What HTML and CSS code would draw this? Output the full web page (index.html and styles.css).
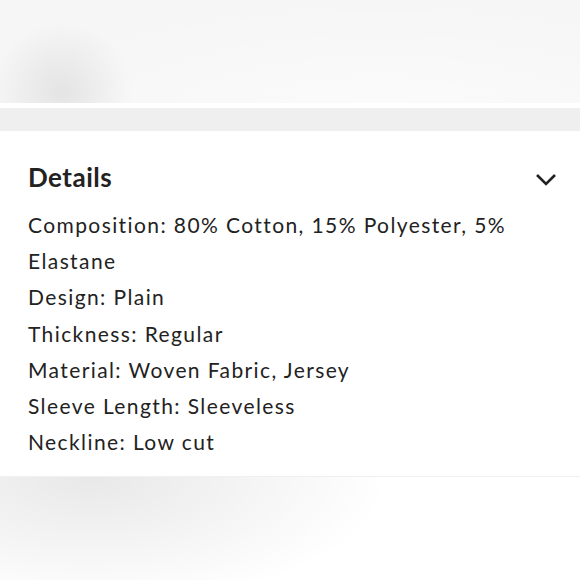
FILE: index.html
```html
<!DOCTYPE html>
<html>
<head>
<meta charset="utf-8">
<link rel="stylesheet" href="styles.css">
</head>
<body>
<div class="photo-top"></div>
<div class="divider"></div>
<section class="panel">
  <div class="panel-head">
    <h2 class="title">Details</h2>
    <svg class="chevron" width="22" height="14" viewBox="0 0 22 14"><path d="M2 2 L11 11 L20 2" fill="none" stroke="#222" stroke-width="2.6"/></svg>
  </div>
  <div class="list">
    <p>Composition: 80% Cotton, 15% Polyester, 5% Elastane</p>
    <p>Design: Plain</p>
    <p>Thickness: Regular</p>
    <p>Material: Woven Fabric, Jersey</p>
    <p>Sleeve Length: Sleeveless</p>
    <p>Neckline: Low cut</p>
  </div>
</section>
<div class="photo-bottom"></div>
</body>
</html>
```
FILE: styles.css
```css
html, body { margin: 0; padding: 0; background: #fff; }
body { width: 580px; height: 580px; overflow: hidden; font-family: Lato, "Liberation Sans", sans-serif; color: #222; }
.photo-top {
  height: 103px;
  background:
    radial-gradient(ellipse 70px 70px at 62px 92px, rgba(0,0,0,0.08), rgba(0,0,0,0) 100%),
    radial-gradient(ellipse 400px 120px at 380px 120px, rgba(255,255,255,0.6), rgba(255,255,255,0) 100%),
    #f6f6f6;
  border-bottom: 5px solid #fff;
}
.divider { height: 23px; background: #efefef; }
.panel { background: #fff; padding: 0 22px 0 28px; height: 345px; border-bottom: 1px solid #f0f0f0; }
.panel-head { display: flex; justify-content: space-between; align-items: flex-start; padding-top: 31px; height: 32px; }
.title { margin: 0; font-size: 26px; font-weight: 700; line-height: 30px; letter-spacing: 0.5px; }
.chevron { margin-top: 11px; margin-right: 1px; }
.list { margin-top: 13px; font-size: 21px; line-height: 36.2px; letter-spacing: 1.4px; }
.list p { margin: 0; }
.photo-bottom {
  height: 104px;
  background:
    radial-gradient(ellipse 300px 130px at 90px 0px, rgba(0,0,0,0.09), rgba(0,0,0,0) 100%),
    #fff;
}
```
